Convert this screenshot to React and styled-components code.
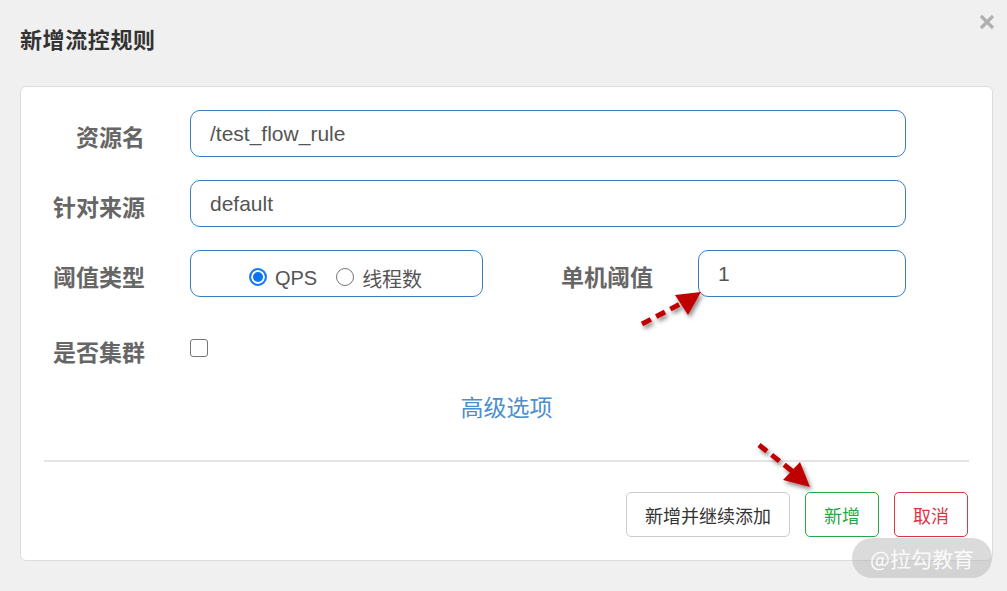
import React from 'react';
import styled, { createGlobalStyle } from 'styled-components';

const GlobalStyle = createGlobalStyle`
  html, body {
    margin: 0;
    padding: 0;
    background: #f0f0f0;
  }
  body {
    font-family: "Liberation Sans", "Noto Sans CJK SC", sans-serif;
  }
`;

function App() {
  return (
    <Page>
      <GlobalStyle />
      <Header>
        <Title>新增流控规则</Title>
        <Close aria-label="close">
          <svg width="16" height="16" viewBox="0 0 16 16">
            <path d="M2 2 L14 14 M14 2 L2 14" stroke="#b0b0b0" strokeWidth="3.2" strokeLinecap="butt" />
          </svg>
        </Close>
      </Header>

      <Panel>
        <Row>
          <Label>资源名</Label>
          <Input grow defaultValue="/test_flow_rule" />
        </Row>
        <Row>
          <Label>针对来源</Label>
          <Input grow defaultValue="default" />
        </Row>
        <Row>
          <Label>阈值类型</Label>
          <RadioBox>
            <RadioItem>
              <Radio checked />
              QPS
            </RadioItem>
            <RadioItem>
              <Radio />
              线程数
            </RadioItem>
          </RadioBox>
          <Label wide>单机阈值</Label>
          <Input grow defaultValue="1" />
        </Row>
        <Row check>
          <Label>是否集群</Label>
          <Checkbox />
        </Row>
        <Advanced>高级选项</Advanced>
        <Divider />
        <Footer>
          <Button>新增并继续添加</Button>
          <Button kind="ok">新增</Button>
          <Button kind="cancel">取消</Button>
        </Footer>
      </Panel>

      <Arrows width="1007" height="591" viewBox="0 0 1007 591">
        <defs>
          <filter id="sh" x="-20%" y="-20%" width="140%" height="140%">
            <feDropShadow dx="2" dy="3" stdDeviation="2" floodColor="#000" floodOpacity="0.45" />
          </filter>
        </defs>
        <g filter="url(#sh)">
          <line x1="642" y1="324" x2="682" y2="303" stroke="#c00000" strokeWidth="5" strokeDasharray="10 6" />
          <polygon points="701,292 675,295 688,315" fill="#c00000" />
          <line x1="759" y1="445" x2="792" y2="471" stroke="#c00000" strokeWidth="5" strokeDasharray="10 6" />
          <polygon points="810,487 783,480 800,462" fill="#c00000" />
        </g>
      </Arrows>

      <Watermark>@拉勾教育</Watermark>
    </Page>
  );
}

const Page = styled.div`
  position: relative;
  width: 1007px;
  height: 591px;
  overflow: hidden;
`;

const Header = styled.div`
  position: relative;
  height: 86px;
  padding-left: 20px;
  display: flex;
  align-items: center;
  box-sizing: border-box;
  padding-bottom: 10px;
`;

const Title = styled.h4`
  margin: 0;
  font-family: "Noto Sans CJK SC", sans-serif;
  font-size: 22px;
  font-weight: 700;
  color: #333;
  letter-spacing: 0.6px;
`;

const Close = styled.span`
  position: absolute;
  right: 12px;
  top: 14px;
  line-height: 0;
`;

const Panel = styled.div`
  margin: 0 14px 0 20px;
  background: #fff;
  border: 1px solid #dcdcdc;
  border-radius: 6px;
  padding: 23px 0 23px;
  display: flex;
  flex-direction: column;
`;

const Row = styled.div`
  display: flex;
  align-items: center;
  padding-right: 86px;
  margin-bottom: ${p => (p.check ? '0' : '23px')};
  margin-top: ${p => (p.check ? '7px' : '0')};
  height: ${p => (p.check ? '42px' : 'auto')};
`;

const Label = styled.label`
  flex: none;
  width: ${p => (p.wide ? '170px' : '124px')};
  margin-right: 45px;
  text-align: right;
  font-family: "Noto Sans CJK SC", sans-serif;
  font-size: 23px;
  font-weight: 700;
  color: #666;
  padding-top: 5px;
`;

const Input = styled.input`
  flex: ${p => (p.grow ? '1' : 'none')};
  min-width: 0;
  height: 47px;
  box-sizing: border-box;
  border: 1px solid #3c7dc0;
  border-radius: 10px;
  padding: 0 20px 0 19px;
  font-family: "Liberation Sans", "Noto Sans CJK SC", sans-serif;
  font-size: 21px;
  color: #555;
  outline: none;
  background: #fff;
`;

const RadioBox = styled.div`
  flex: none;
  width: 293px;
  height: 47px;
  box-sizing: border-box;
  border: 1px solid #3c7dc0;
  border-radius: 10px;
  display: flex;
  align-items: center;
  justify-content: center;
  gap: 19px;
  padding-top: 10px;
  padding-right: 2px;
`;

const RadioItem = styled.span`
  display: flex;
  align-items: center;
  gap: 8px;
  font-family: "Liberation Sans", "Noto Sans CJK SC", sans-serif;
  font-size: 20px;
  color: #555;
`;

const Radio = styled.span`
  display: inline-block;
  width: 18px;
  height: 18px;
  box-sizing: border-box;
  border-radius: 50%;
  border: ${p => (p.checked ? '2px solid #1a7cf5' : '1px solid #767676')};
  background: ${p => (p.checked ? '#0a74f0' : '#fff')};
  box-shadow: ${p => (p.checked ? 'inset 0 0 0 2px #fff' : 'none')};
  margin-top: -3px;
`;

const Checkbox = styled.span`
  display: inline-block;
  width: 18px;
  height: 18px;
  box-sizing: border-box;
  border: 1px solid #767676;
  border-radius: 3px;
  background: #fff;
`;

const Advanced = styled.a`
  align-self: center;
  margin-top: 20px;
  font-family: "Noto Sans CJK SC", sans-serif;
  font-size: 23px;
  color: #4a8fd0;
  cursor: pointer;
`;

const Divider = styled.hr`
  margin: 37px 23px 0;
  border: none;
  border-top: 2px solid #e3e3e3;
`;

const Footer = styled.div`
  display: flex;
  justify-content: flex-end;
  gap: 15px;
  padding: 30px 24px 0;
`;

const colors = {
  ok: { border: '#28a745', text: '#28a745' },
  cancel: { border: '#dc3545', text: '#dc3545' },
  plain: { border: '#cccccc', text: '#333333' },
};

const Button = styled.button`
  height: 45px;
  padding: 0 18px;
  box-sizing: border-box;
  background: #fff;
  border: 1px solid ${p => colors[p.kind || 'plain'].border};
  color: ${p => colors[p.kind || 'plain'].text};
  border-radius: 5px;
  font-family: "Noto Sans CJK SC", sans-serif;
  font-size: 18px;
  cursor: pointer;
`;

const Arrows = styled.svg`
  position: absolute;
  left: 0;
  top: 0;
  pointer-events: none;
`;

const Watermark = styled.div`
  position: absolute;
  left: 852px;
  top: 538px;
  width: 140px;
  height: 40px;
  border-radius: 20px;
  background: rgba(175, 175, 175, 0.45);
  color: rgba(255, 255, 255, 0.9);
  font-family: "Noto Sans CJK SC", sans-serif;
  font-size: 21px;
  display: flex;
  align-items: center;
  justify-content: center;
`;

export default App;
